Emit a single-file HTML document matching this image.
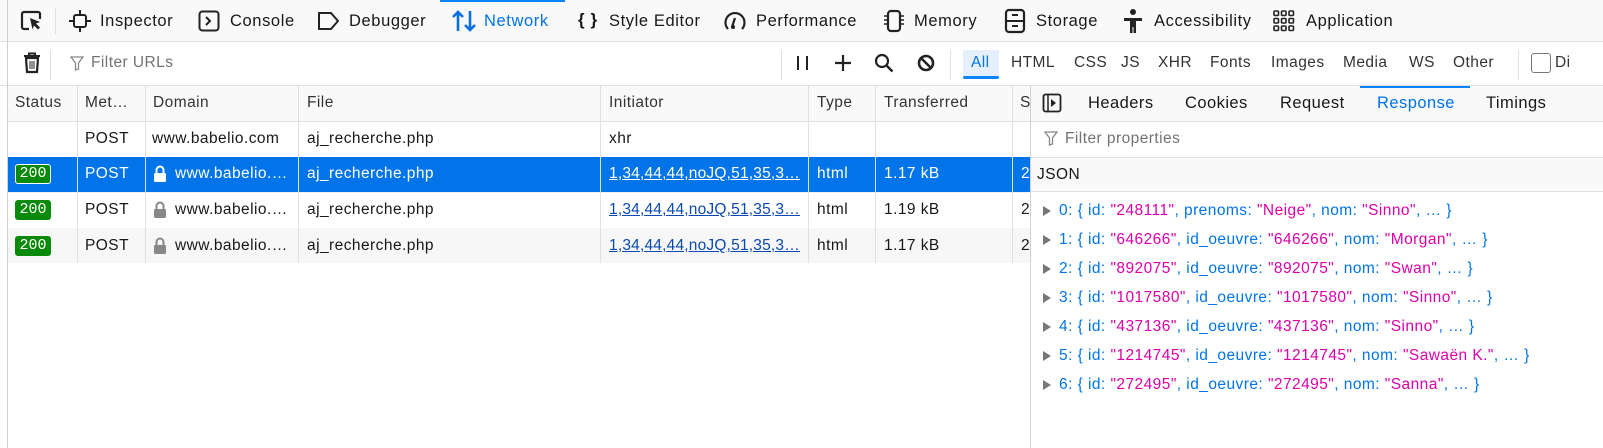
<!DOCTYPE html>
<html><head><meta charset="utf-8"><style>
*{box-sizing:border-box;margin:0;padding:0}
body{width:1603px;height:448px;overflow:hidden;background:#fff;font-family:"Liberation Sans","DejaVu Sans",sans-serif;color:#18181a;position:relative}
.a{position:absolute;white-space:nowrap}
.t{position:absolute;white-space:nowrap;font-size:16.5px;line-height:20px;letter-spacing:0.6px}
.s{position:absolute;white-space:nowrap;font-size:15.5px;line-height:18px;letter-spacing:0.45px}
.hl{position:absolute;height:1px;background:#e0e0e2}
.vl{position:absolute;width:1px;background:#e0e0e2}
.badge{position:absolute;left:15px;width:36px;height:20px;background:#0a8a0a;color:#fff;border-radius:3px;font-family:"Liberation Mono",monospace;font-size:15px;line-height:20px;text-align:center;letter-spacing:0}
.b{color:#0074e8}.p{color:#dd00a9}
.arr{position:absolute;left:1043px;width:0;height:0;border-left:8px solid #777;border-top:5px solid transparent;border-bottom:5px solid transparent}
</style></head><body>
<div class="a" style="left:0;top:0;width:1603px;height:42px;background:#f9f9fa;border-bottom:1px solid #e0e0e2"></div>
<div class="a" style="left:440px;top:0;width:125px;height:2px;background:#0a84ff"></div>
<svg class="a" style="left:20px;top:10px" width="24" height="22" viewBox="0 0 24 22"><path d="M9 19H4a2 2 0 0 1-2-2V4a2 2 0 0 1 2-2h14a2 2 0 0 1 2 2v5" fill="none" stroke="#222" stroke-width="2.2"/><path d="M10 8l10 4-4 1.5 4 4-2 2-4-4-1.5 4z" fill="#222"/></svg>
<div class="vl" style="left:55px;top:8px;height:26px"></div>
<svg class="a" style="left:68px;top:9px" width="24" height="24" viewBox="0 0 24 24"><rect x="6" y="6" width="12" height="12" rx="2" fill="none" stroke="#222" stroke-width="2"/><path d="M12 1v5M12 18v5M1 12h5M18 12h5" stroke="#222" stroke-width="2"/></svg>
<div class="t" style="left:100px;top:11px">Inspector</div>
<svg class="a" style="left:198px;top:10px" width="22" height="22" viewBox="0 0 22 22"><rect x="1.5" y="1.5" width="19" height="19" rx="3" fill="none" stroke="#222" stroke-width="2"/><path d="M8 7l4 4-4 4" fill="none" stroke="#222" stroke-width="2"/></svg>
<div class="t" style="left:230px;top:11px">Console</div>
<svg class="a" style="left:316px;top:11px" width="24" height="20" viewBox="0 0 24 20"><path d="M3 2h12l7 8-7 8H3z" fill="none" stroke="#222" stroke-width="2" stroke-linejoin="round"/></svg>
<div class="t" style="left:349px;top:11px">Debugger</div>
<svg class="a" style="left:451px;top:9px" width="26" height="24" viewBox="0 0 26 24"><path d="M7 22V3M2 8l5-5 5 5M19 2v19M14 16l5 5 5-5" fill="none" stroke="#0a70e0" stroke-width="2.6"/></svg>
<div class="t b" style="left:484px;top:11px">Network</div>
<div class="t" style="left:578px;top:10px;font-weight:bold;font-size:17px">{ }</div>
<div class="t" style="left:609px;top:11px">Style Editor</div>
<svg class="a" style="left:723px;top:9px" width="24" height="24" viewBox="0 0 24 24"><path d="M5 20A9.5 9.5 0 1 1 19 20" fill="none" stroke="#222" stroke-width="2.2"/><path d="M9 18l3-9" stroke="#222" stroke-width="2.2"/><circle cx="10" cy="18" r="2" fill="#222"/></svg>
<div class="t" style="left:756px;top:11px">Performance</div>
<svg class="a" style="left:881px;top:8px" width="26" height="26" viewBox="0 0 26 26"><rect x="7" y="3" width="12" height="20" rx="3" fill="none" stroke="#222" stroke-width="2.2"/><path d="M3 8h4M3 12h4M3 16h4M19 8h4M19 12h4M19 16h4" stroke="#222" stroke-width="1.5"/></svg>
<div class="t" style="left:914px;top:11px">Memory</div>
<svg class="a" style="left:1004px;top:8px" width="22" height="26" viewBox="0 0 22 26"><rect x="2" y="2" width="18" height="22" rx="3" fill="none" stroke="#222" stroke-width="2.2"/><path d="M2 13h18M8 7h6M8 18h6" stroke="#222" stroke-width="2"/></svg>
<div class="t" style="left:1036px;top:11px">Storage</div>
<svg class="a" style="left:1122px;top:8px" width="22" height="26" viewBox="0 0 22 26"><circle cx="11" cy="4" r="3" fill="#222"/><path d="M2 10h18v3h-6v12h-2.5v-6h-1v6H8V13H2z" fill="#222"/></svg>
<div class="t" style="left:1154px;top:11px">Accessibility</div>
<svg class="a" style="left:1273px;top:10px" width="22" height="22" viewBox="0 0 22 22" fill="none" stroke="#222" stroke-width="1.6"><rect x="1" y="1" width="4.5" height="4.5" rx="1"/><rect x="8.5" y="1" width="4.5" height="4.5" rx="1"/><rect x="16" y="1" width="4.5" height="4.5" rx="1"/><rect x="1" y="8.5" width="4.5" height="4.5" rx="1"/><rect x="8.5" y="8.5" width="4.5" height="4.5" rx="1"/><rect x="16" y="8.5" width="4.5" height="4.5" rx="1"/><rect x="1" y="16" width="4.5" height="4.5" rx="1"/><rect x="8.5" y="16" width="4.5" height="4.5" rx="1"/><rect x="16" y="16" width="4.5" height="4.5" rx="1"/></svg>
<div class="t" style="left:1306px;top:11px">Application</div>

<div class="hl" style="left:0;top:85px;width:1603px"></div>
<svg class="a" style="left:23px;top:52px" width="18" height="22" viewBox="0 0 18 22"><path d="M1 4h16M6 4V1.5h6V4" fill="none" stroke="#222" stroke-width="2"/><path d="M3 6h12l-1 14H4z" fill="none" stroke="#222" stroke-width="2.2"/><path d="M7 9v8M9 9v8M11 9v8" stroke="#222" stroke-width="1"/></svg>
<div class="vl" style="left:50px;top:50px;height:30px"></div>
<svg class="a" style="left:70px;top:56px" width="14" height="15" viewBox="0 0 14 15"><path d="M1 1h12L8.5 7v6L5.5 14V7z" fill="none" stroke="#888" stroke-width="1.3"/></svg>
<div class="s" style="left:91px;top:54px;color:#737373">Filter URLs</div>
<div class="vl" style="left:781px;top:50px;height:30px"></div>
<div class="a" style="left:797px;top:56px;width:2px;height:14px;background:#222"></div>
<div class="a" style="left:806px;top:56px;width:2px;height:14px;background:#222"></div>
<svg class="a" style="left:834px;top:54px" width="18" height="18"><path d="M9 1v16M1 9h16" stroke="#222" stroke-width="2.2"/></svg>
<svg class="a" style="left:874px;top:53px" width="20" height="20"><circle cx="8" cy="8" r="6" fill="none" stroke="#222" stroke-width="2.2"/><path d="M12.5 12.5l6 6" stroke="#222" stroke-width="2.4"/></svg>
<svg class="a" style="left:917px;top:54px" width="18" height="18"><circle cx="9" cy="9" r="7" fill="none" stroke="#222" stroke-width="2.6"/><path d="M4 4l10 10" stroke="#222" stroke-width="2.6"/></svg>
<div class="vl" style="left:950px;top:50px;height:30px"></div>
<div class="a" style="left:963px;top:50px;width:36px;height:28px;background:#e6f0fc"></div>
<div class="a" style="left:963px;top:76px;width:36px;height:3px;background:#0a84ff;border-radius:2px"></div>
<div class="s b" style="left:971px;top:54px">All</div>
<div class="s" style="left:1011px;top:54px;color:#333">HTML</div>
<div class="s" style="left:1074px;top:54px;color:#333">CSS</div>
<div class="s" style="left:1121px;top:54px;color:#333">JS</div>
<div class="s" style="left:1158px;top:54px;color:#333">XHR</div>
<div class="s" style="left:1210px;top:54px;color:#333">Fonts</div>
<div class="s" style="left:1271px;top:54px;color:#333">Images</div>
<div class="s" style="left:1343px;top:54px;color:#333">Media</div>
<div class="s" style="left:1409px;top:54px;color:#333">WS</div>
<div class="s" style="left:1453px;top:54px;color:#333">Other</div>
<div class="vl" style="left:1518px;top:50px;height:30px"></div>
<div class="a" style="left:1531px;top:53px;width:20px;height:20px;border:1.5px solid #777;border-radius:3px"></div>
<div class="s" style="left:1555px;top:54px;color:#333">Di</div>

<div class="vl" style="left:7px;top:0;height:448px;background:#d0d0d2"></div>
<div class="a" style="left:8px;top:86px;width:1022px;height:35px;background:#f9f9fa"></div>
<div class="hl" style="left:8px;top:121px;width:1022px"></div>
<div class="a" style="left:8px;top:157px;width:1022px;height:35px;background:#0074e8"></div>
<div class="hl" style="left:8px;top:192px;width:1022px;background:#f0f0f2"></div>
<div class="a" style="left:8px;top:228px;width:1022px;height:35px;background:#f7f7f8"></div>
<div class="vl" style="left:77px;top:86px;height:177px"></div>
<div class="vl" style="left:145px;top:86px;height:177px"></div>
<div class="vl" style="left:298px;top:86px;height:177px"></div>
<div class="vl" style="left:600px;top:86px;height:177px"></div>
<div class="vl" style="left:808px;top:86px;height:177px"></div>
<div class="vl" style="left:875px;top:86px;height:177px"></div>
<div class="vl" style="left:1012px;top:86px;height:177px"></div>
<div class="vl" style="left:1030px;top:86px;height:362px;background:#d0d0d2"></div>
<div class="s" style="left:15px;top:94px;color:#333">Status</div>
<div class="s" style="left:85px;top:94px;color:#333">Met…</div>
<div class="s" style="left:153px;top:94px;color:#333">Domain</div>
<div class="s" style="left:307px;top:94px;color:#333">File</div>
<div class="s" style="left:609px;top:94px;color:#333">Initiator</div>
<div class="s" style="left:817px;top:94px;color:#333">Type</div>
<div class="s" style="left:884px;top:94px;color:#333">Transferred</div>
<div class="s" style="left:1020px;top:94px;color:#333">S</div>

<div class="s" style="left:85px;top:130px">POST</div>
<div class="s" style="left:152px;top:130px">www.babelio.com</div>
<div class="s" style="left:307px;top:130px">aj_recherche.php</div>
<div class="s" style="left:609px;top:130px">xhr</div>

<div class="badge" style="top:164px;border:1.5px solid #fff;line-height:17px">200</div>
<div class="s" style="left:85px;top:165px;color:#fff">POST</div>
<svg class="a" style="left:153px;top:165px" width="14" height="18" viewBox="0 0 14 18"><path d="M3.5 8V5a3.5 3.5 0 0 1 7 0v3" fill="none" stroke="#fff" stroke-width="2"/><rect x="1" y="8" width="12" height="9" rx="1.5" fill="#fff"/></svg>
<div class="s" style="left:175px;top:165px;color:#fff">www.babelio.…</div>
<div class="s" style="left:307px;top:165px;color:#fff">aj_recherche.php</div>
<div class="s" style="left:609px;top:165px;color:#fff;text-decoration:underline;letter-spacing:0.2px">1,34,44,44,noJQ,51,35,3…</div>
<div class="s" style="left:817px;top:165px;color:#fff">html</div>
<div class="s" style="left:884px;top:165px;color:#fff">1.17 kB</div>
<div class="s" style="left:1021px;top:165px;color:#fff">2</div>

<div class="badge" style="top:200px">200</div>
<div class="s" style="left:85px;top:201px">POST</div>
<svg class="a" style="left:153px;top:201px" width="14" height="18" viewBox="0 0 14 18"><path d="M3.5 8V5a3.5 3.5 0 0 1 7 0v3" fill="none" stroke="#888" stroke-width="2"/><rect x="1" y="8" width="12" height="9" rx="1.5" fill="#888"/></svg>
<div class="s" style="left:175px;top:201px">www.babelio.…</div>
<div class="s" style="left:307px;top:201px">aj_recherche.php</div>
<div class="s" style="left:609px;top:201px;color:#0a4ab0;text-decoration:underline;letter-spacing:0.2px">1,34,44,44,noJQ,51,35,3…</div>
<div class="s" style="left:817px;top:201px">html</div>
<div class="s" style="left:884px;top:201px">1.19 kB</div>
<div class="s" style="left:1021px;top:201px">2</div>

<div class="badge" style="top:236px">200</div>
<div class="s" style="left:85px;top:237px">POST</div>
<svg class="a" style="left:153px;top:237px" width="14" height="18" viewBox="0 0 14 18"><path d="M3.5 8V5a3.5 3.5 0 0 1 7 0v3" fill="none" stroke="#888" stroke-width="2"/><rect x="1" y="8" width="12" height="9" rx="1.5" fill="#888"/></svg>
<div class="s" style="left:175px;top:237px">www.babelio.…</div>
<div class="s" style="left:307px;top:237px">aj_recherche.php</div>
<div class="s" style="left:609px;top:237px;color:#0a4ab0;text-decoration:underline;letter-spacing:0.2px">1,34,44,44,noJQ,51,35,3…</div>
<div class="s" style="left:817px;top:237px">html</div>
<div class="s" style="left:884px;top:237px">1.17 kB</div>
<div class="s" style="left:1021px;top:237px">2</div>

<div class="a" style="left:1031px;top:86px;width:572px;height:35px;background:#f9f9fa"></div>
<div class="hl" style="left:1031px;top:121px;width:572px"></div>
<div class="a" style="left:1360px;top:86px;width:110px;height:2px;background:#0a84ff"></div>
<svg class="a" style="left:1042px;top:93px" width="20" height="20" viewBox="0 0 20 20"><rect x="1.5" y="1.5" width="17" height="17" rx="2" fill="none" stroke="#222" stroke-width="1.8"/><path d="M6 2v16" stroke="#222" stroke-width="1.5"/><path d="M9 6l5 4-5 4z" fill="#222"/></svg>
<div class="s" style="left:1088px;top:94px;font-size:16.5px">Headers</div>
<div class="s" style="left:1185px;top:94px;font-size:16.5px">Cookies</div>
<div class="s" style="left:1280px;top:94px;font-size:16.5px">Request</div>
<div class="s b" style="left:1377px;top:94px;font-size:16.5px">Response</div>
<div class="s" style="left:1486px;top:94px;font-size:16.5px">Timings</div>
<svg class="a" style="left:1044px;top:131px" width="14" height="15" viewBox="0 0 14 15"><path d="M1 1h12L8.5 7v6L5.5 14V7z" fill="none" stroke="#888" stroke-width="1.3"/></svg>
<div class="s" style="left:1065px;top:130px;color:#737373">Filter properties</div>
<div class="a" style="left:1031px;top:157px;width:572px;height:35px;background:#f9f9fa;border-top:1px solid #e0e0e2;border-bottom:1px solid #e0e0e2"></div>
<div class="s" style="left:1037px;top:166px">JSON</div>

<div class="arr" style="top:206px"></div>
<div class="s b" style="left:1059px;top:202px">0: { id: <span class="p">"248111"</span>, prenoms: <span class="p">"Neige"</span>, nom: <span class="p">"Sinno"</span>, … }</div>
<div class="arr" style="top:235px"></div>
<div class="s b" style="left:1059px;top:231px">1: { id: <span class="p">"646266"</span>, id_oeuvre: <span class="p">"646266"</span>, nom: <span class="p">"Morgan"</span>, … }</div>
<div class="arr" style="top:264px"></div>
<div class="s b" style="left:1059px;top:260px">2: { id: <span class="p">"892075"</span>, id_oeuvre: <span class="p">"892075"</span>, nom: <span class="p">"Swan"</span>, … }</div>
<div class="arr" style="top:293px"></div>
<div class="s b" style="left:1059px;top:289px">3: { id: <span class="p">"1017580"</span>, id_oeuvre: <span class="p">"1017580"</span>, nom: <span class="p">"Sinno"</span>, … }</div>
<div class="arr" style="top:322px"></div>
<div class="s b" style="left:1059px;top:318px">4: { id: <span class="p">"437136"</span>, id_oeuvre: <span class="p">"437136"</span>, nom: <span class="p">"Sinno"</span>, … }</div>
<div class="arr" style="top:351px"></div>
<div class="s b" style="left:1059px;top:347px">5: { id: <span class="p">"1214745"</span>, id_oeuvre: <span class="p">"1214745"</span>, nom: <span class="p">"Sawaën K."</span>, … }</div>
<div class="arr" style="top:380px"></div>
<div class="s b" style="left:1059px;top:376px">6: { id: <span class="p">"272495"</span>, id_oeuvre: <span class="p">"272495"</span>, nom: <span class="p">"Sanna"</span>, … }</div>
</body></html>
